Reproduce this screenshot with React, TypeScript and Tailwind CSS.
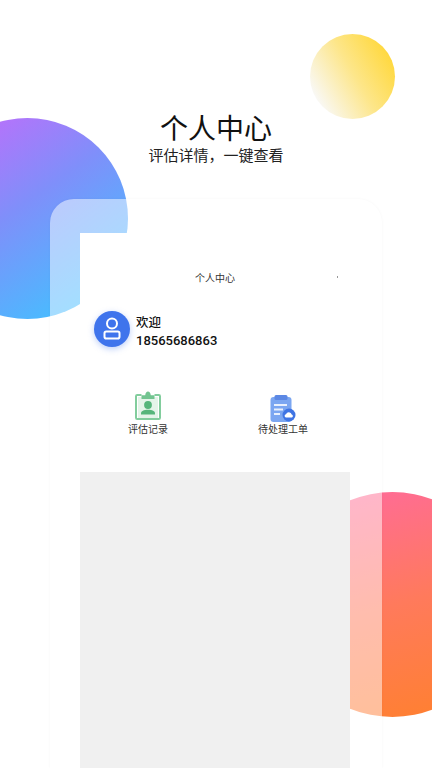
import React from "react";

const cjk = "font-['Noto_Sans_CJK_SC','Noto_Sans',sans-serif]";

function UserIcon() {
  return (
    <svg width="20" height="24" viewBox="0 0 20 24" fill="none" stroke="#fff" strokeWidth="2">
      <circle cx="10" cy="6.500" r="5" />
      <rect x="2.500" y="14.500" width="15" height="7" rx="1.800" />
    </svg>
  );
}

function RecordIcon() {
  return (
    <svg width="26" height="29" viewBox="0 0 26 29" fill="none">
      <path d="M6.500 4H2.200C1.500 4 1 4.500 1 5.200v21.600c0 .7.500 1.200 1.200 1.200h21.600c.7 0 1.200-.5 1.200-1.200V5.200C25 4.500 24.500 4 23.800 4h-4.300" stroke="#82cd9d" strokeWidth="2" />
      <rect x="3" y="6" width="20" height="21" fill="#e4f4e9" />
      <path d="M6.500 8V4.200h3.700C10.600 2 11.500 .6 13 .6s2.400 1.400 2.800 3.600h3.700V8z" fill="#72c490" />
      <circle cx="13" cy="14" r="3.900" fill="#55b57a" />
      <path d="M6 23.500v-1.200c0-2.200 2.800-3.600 7-3.600s7 1.400 7 3.600v1.200z" fill="#55b57a" />
    </svg>
  );
}

function OrderIcon() {
  return (
    <svg width="26" height="27" viewBox="0 0 26 27" fill="none">
      <rect x="0.500" y="2" width="21" height="25" rx="3" fill="#7ba6f1" />
      <rect x="4.500" y="0" width="13" height="5" rx="1.500" fill="#5c88e4" />
      <rect x="4" y="9" width="13" height="2" fill="#e8f0fd" />
      <rect x="4" y="13.500" width="9" height="2" fill="#e8f0fd" />
      <rect x="4" y="18" width="6" height="2" fill="#e8f0fd" />
      <circle cx="19" cy="20" r="6.500" fill="#3f74e4" />
      <path d="M15.800 22.500a1.700 1.700 0 0 1 .2-3.300 3 3 0 0 1 5.700.4 1.500 1.500 0 0 1 .1 2.900z" fill="#fff" />
    </svg>
  );
}

export default function App() {
  return (
    <div className={`relative h-[768px] w-[432px] overflow-hidden bg-white ${cjk}`}>
      {/* Decorative circles */}
      <div className="absolute left-[-73px] top-[118px] h-[201px] w-[201px] rounded-full bg-[linear-gradient(145deg,#c06dfb_8%,#7f8ffa_45%,#45bfff_88%)]" />
      <div className="absolute left-[310px] top-[34px] h-[85px] w-[85px] rounded-full bg-[linear-gradient(60deg,#f9f9f9_12%,#fde68a_52%,#ffd83d_88%)]" />
      <div className="absolute left-[280px] top-[492px] h-[225px] w-[225px] rounded-full bg-[linear-gradient(165deg,#ff6b99_5%,#ff7a5c_50%,#ff8030_95%)]" />

      <div className="relative flex h-full flex-col">
        <div className="flex flex-col items-center pt-[112px]">
          <h1 className="text-[28px] leading-[30px] font-normal text-[#111]">个人中心</h1>
          <p className="mt-[5px] text-[15px] leading-[16px] text-[#222]">评估详情，一键查看</p>
        </div>

        {/* Phone frame */}
        <div className="ml-[50px] mt-[36px] flex w-[332px] flex-1 flex-col rounded-t-[24px] bg-white/50 pl-[30px] pr-[32px] pt-[34px] shadow-[0_0_3px_rgba(0,0,0,0.04)]">
          <div className="flex flex-1 flex-col bg-white">
            <div className="relative mt-[34px] flex h-[20px] items-center justify-center text-[10px] text-[#333]">
              个人中心
              <span className="absolute right-[12px] top-[9px] h-[2px] w-[1px] bg-[#999]" />
            </div>

            <div className="ml-[14px] mt-[24px] flex items-start gap-[6px]">
              <div className="flex h-[36px] w-[36px] items-center justify-center rounded-full bg-[#3f74ec] shadow-[0_2px_6px_rgba(63,116,236,0.35)]">
                <UserIcon />
              </div>
              <div className="flex flex-col gap-[1px] pt-[2px] text-[#111]">
                <span className="text-[12.500px] leading-[18px] font-medium">欢迎</span>
                <span className="text-[13px] leading-[18px] font-medium font-['Roboto',sans-serif]">18565686863</span>
              </div>
            </div>

            <div className="mt-[41px] flex">
              <div className="ml-[48px] flex w-[40px] flex-col items-center">
                <RecordIcon />
                <span className="mt-[2px] whitespace-nowrap text-[10px] leading-[14px] text-[#333]">评估记录</span>
              </div>
              <div className="ml-[90px] flex w-[50px] flex-col items-center pt-[4px]">
                <OrderIcon />
                <span className="whitespace-nowrap text-[10px] leading-[14px] text-[#333]">待处理工单</span>
              </div>
            </div>

            <div className="mt-[36px] flex-1 bg-[#f0f0f0]" />
          </div>
        </div>
      </div>
    </div>
  );
}
